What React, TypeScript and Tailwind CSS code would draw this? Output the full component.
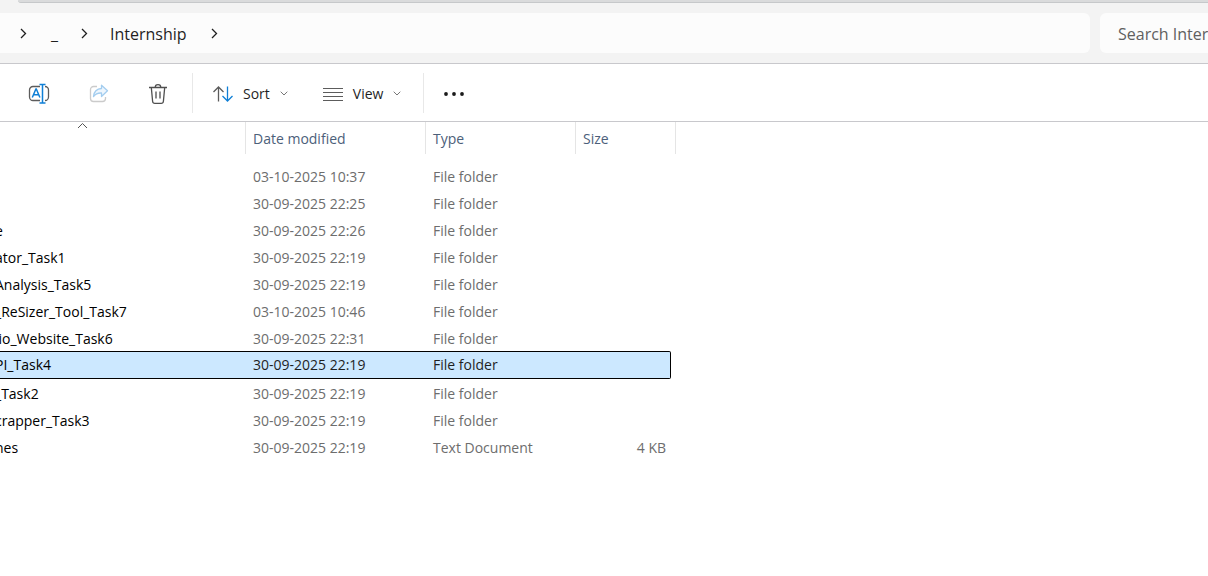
import React from 'react';

type Entry = {
  name: string;
  modified: string;
  type: string;
  size?: string;
  selected?: boolean;
};

const entries: Entry[] = [
  { name: '', modified: '03-10-2025 10:37', type: 'File folder' },
  { name: '', modified: '30-09-2025 22:25', type: 'File folder' },
  { name: 'e', modified: '30-09-2025 22:26', type: 'File folder' },
  { name: 'ator_Task1', modified: '30-09-2025 22:19', type: 'File folder' },
  { name: 'Analysis_Task5', modified: '30-09-2025 22:19', type: 'File folder' },
  { name: '_ReSizer_Tool_Task7', modified: '03-10-2025 10:46', type: 'File folder' },
  { name: 'lio_Website_Task6', modified: '30-09-2025 22:31', type: 'File folder' },
  { name: 'PI_Task4', modified: '30-09-2025 22:19', type: 'File folder', selected: true },
  { name: '_Task2', modified: '30-09-2025 22:19', type: 'File folder' },
  { name: 'crapper_Task3', modified: '30-09-2025 22:19', type: 'File folder' },
  { name: 'nes', modified: '30-09-2025 22:19', type: 'Text Document', size: '4 KB' },
];

function Crumb() {
  return (
    <svg width="7" height="11" viewBox="0 0 7 11" fill="none" stroke="#1f1f1f" strokeWidth="1.3" aria-hidden="true">
      <path d="M1 1 5.500 5.500 1 10" />
    </svg>
  );
}

function Caret() {
  return (
    <svg width="8" height="5" viewBox="0 0 8 5" fill="none" stroke="#777" strokeWidth="1" aria-hidden="true">
      <path d="M.7.7 4 4 7.3.7" />
    </svg>
  );
}

function RenameIcon() {
  return (
    <svg width="22" height="22" viewBox="0 0 22 22" fill="none" strokeWidth="1.3" aria-hidden="true">
      <path d="M12 3.500H5A3.500 3.500 0 0 0 1.500 7v7A3.500 3.500 0 0 0 5 17.500h7M17 3.500a3.500 3.500 0 0 1 3.500 3.500v7a3.500 3.500 0 0 1-3.500 3.500" stroke="#5c5c5c" />
      <path d="M4.300 14.500 7.900 6h.4l3.600 8.500M5.600 11.700h5" stroke="#0f7fd6" strokeWidth="1.500" />
      <path d="M11.500 1.500h6M11.500 20h6M14.500 1.500V20" stroke="#0f7fd6" strokeWidth="1.500" />
    </svg>
  );
}

function ShareIcon() {
  return (
    <svg width="20" height="20" viewBox="0 0 20 20" fill="none" strokeWidth="1.3" strokeLinejoin="round" aria-hidden="true">
      <path d="M8 2.500H4.500a3 3 0 0 0-3 3v9a3 3 0 0 0 3 3h9a3 3 0 0 0 3-3V13" stroke="#cbcbcb" />
      <path d="M12.500 1.200v3.300C7.500 4.800 5 7.800 4.500 12.500c2-2.700 4.500-3.700 8-3.500v3.500L18.500 6.800Z" stroke="#a3cdef" fill="#eef6fd" />
    </svg>
  );
}

function TrashIcon() {
  return (
    <svg width="20" height="22" viewBox="0 0 20 22" fill="none" stroke="#4f4f4f" strokeWidth="1.3" aria-hidden="true">
      <path d="M1 4.500h18M3.300 4.500l1.300 13.700a2.300 2.300 0 0 0 2.300 2.100h6.200a2.300 2.300 0 0 0 2.300-2.100l1.300-13.700M7.200 4.500a2.800 2.800 0 0 1 5.600 0M8 8.500v7M12 8.500v7" />
    </svg>
  );
}

function SortIcon() {
  return (
    <svg width="20" height="16" viewBox="0 0 20 16" fill="none" strokeWidth="1.3" aria-hidden="true">
      <path d="M5.500 15.500V1M.5 6l5-5 5 5" stroke="#5c5c5c" />
      <path d="M14.500.5V15M9.500 10l5 5 5-5" stroke="#0f7fd6" />
    </svg>
  );
}

function ViewIcon() {
  return (
    <svg width="20" height="14" viewBox="0 0 20 14" stroke="#5c5c5c" strokeWidth="1" aria-hidden="true">
      <path d="M0 1.500h20M0 5.500h20M0 9.500h20M0 13.500h20" />
    </svg>
  );
}

function MoreIcon() {
  return (
    <svg width="20" height="4" viewBox="0 0 20 4" fill="#1a1a1a" aria-hidden="true">
      <circle cx="2" cy="2" r="1.900" />
      <circle cx="10" cy="2" r="1.900" />
      <circle cx="18" cy="2" r="1.900" />
    </svg>
  );
}

function Row({ entry }: { entry: Entry }) {
  const tone = entry.selected
    ? 'border-y border-black bg-[#cce8ff] text-[#1f1f1f]'
    : 'pt-[2px] text-[#6d6d6d]';
  return (
    <tr className={entry.selected ? 'h-7' : 'h-[27px]'} aria-selected={entry.selected ?? false}>
      <td className={`overflow-hidden whitespace-nowrap ${tone}`}>
        <span className="-ml-[5px] text-black">{entry.name}</span>
      </td>
      <td className={`px-[7px] ${tone}`}>{entry.modified}</td>
      <td className={`px-[7px] ${tone}`}>{entry.type}</td>
      <td className={`px-[5px] text-right ${tone} ${entry.selected ? 'rounded-r-xs border-r' : ''}`}>{entry.size}</td>
      <td />
    </tr>
  );
}

export default function App() {
  return (
    <div className="min-h-screen overflow-hidden bg-white font-['Open_Sans','Noto_Sans',sans-serif] text-sm text-[#1f1f1f]">
      <header className="border-b border-[#c8c8cc] bg-[#f3f3f3]">
        <div className="ml-[18px] h-[3px] rounded-bl border-b border-[#c6c8ca] bg-[#dadbdc]" />
        <div className="flex gap-[10px] py-[10px]">
          <nav aria-label="Address" className="flex h-10 flex-1 items-center rounded-r-md bg-[#fcfcfc] pt-px pl-5 text-base">
            <Crumb />
            <a href="#parent" className="ml-6">_</a>
            <span className="ml-[23px]"><Crumb /></span>
            <a href="#internship" className="ml-[22px]">Internship</a>
            <span className="ml-6"><Crumb /></span>
          </nav>
          <input
            type="text"
            aria-label="Search Internship"
            placeholder="Search Internship"
            className="h-10 w-27 shrink-0 rounded-l-md bg-[#fcfcfc] pt-px pl-[18px] text-base outline-none placeholder:text-[#606060]"
          />
        </div>
      </header>

      <div role="toolbar" aria-label="Commands" className="flex h-[58px] items-center border-b border-[#c8c8cc]">
        <div className="flex h-10 items-center gap-[39px] border-r border-[#e8e8e8] pt-[2px] pr-6 pl-7">
          <button type="button" aria-label="Rename"><RenameIcon /></button>
          <button type="button" aria-label="Share" disabled><ShareIcon /></button>
          <button type="button" aria-label="Delete"><TrashIcon /></button>
        </div>
        <div className="flex h-10 items-center gap-[35px] border-r border-[#e8e8e8] pt-[2px] pr-[22px] pl-5">
          <button type="button" className="flex items-center gap-[10px]"><SortIcon /><span>Sort</span><Caret /></button>
          <button type="button" className="flex items-center gap-[10px]"><ViewIcon /><span>View</span><Caret /></button>
        </div>
        <button type="button" aria-label="More options" className="h-10 px-5 pt-[2px]"><MoreIcon /></button>
      </div>

      <table className="w-[676px] table-fixed border-separate border-spacing-0">
        <colgroup>
          <col className="w-[246px]" />
          <col className="w-[180px]" />
          <col className="w-[150px]" />
          <col className="w-[95px]" />
          <col className="w-[5px]" />
        </colgroup>
        <thead>
          <tr className="h-8 text-left text-[#4c607a]">
            <th className="border-r border-[#e5e5e5] p-0 align-top" aria-label="Name" aria-sort="ascending">
              <svg className="ml-[77px]" width="11" height="7" viewBox="0 0 11 7" fill="none" stroke="#555" strokeWidth="1" aria-hidden="true">
                <path d="M1 6 5.500 1.500 10 6" />
              </svg>
            </th>
            <th className="border-r border-[#e5e5e5] px-[7px] pt-[2px] font-normal">Date modified</th>
            <th className="border-r border-[#e5e5e5] px-[7px] pt-[2px] font-normal">Type</th>
            <th colSpan={2} className="border-r border-[#e5e5e5] px-[7px] pt-[2px] font-normal">Size</th>
          </tr>
        </thead>
        <tbody>
          <tr className="h-2" aria-hidden="true"><td colSpan={5} className="p-0" /></tr>
          {entries.map((entry, index) => (
            <Row key={index} entry={entry} />
          ))}
        </tbody>
      </table>
    </div>
  );
}
